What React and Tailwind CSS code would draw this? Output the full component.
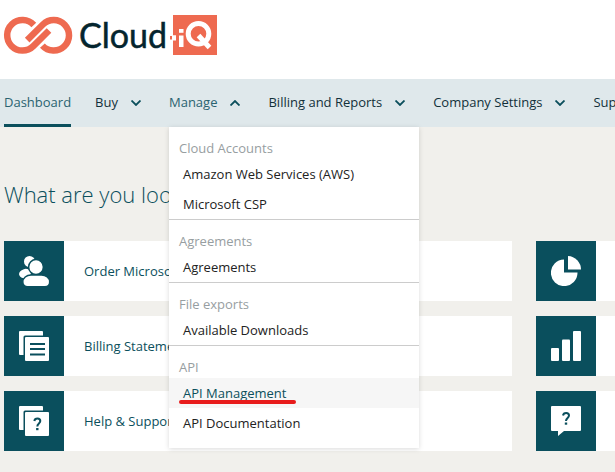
import React from "react";

const menuSections = [
  { title: "Cloud Accounts", items: ["Amazon Web Services (AWS)", "Microsoft CSP"] },
  { title: "Agreements", items: ["Agreements"] },
  { title: "File exports", items: ["Available Downloads"] },
  { title: "API", items: ["API Management", "API Documentation"] },
];

function Logo() {
  return (
    <svg width="217" height="48" viewBox="0 0 217 48" role="img" aria-label="Cloud-iQ">
      <g fill="none" stroke="#ee6a50" strokeWidth="6.500">
        <path d="M33.800 10A15.300 15.300 0 1 0 33.300 31.100L49 15.500" />
        <path d="M42.400 30.600A15.300 15.300 0 1 0 42.900 9.500L27.200 25.100" />
      </g>
      <text x="79" y="33" fontSize="34" fill="#04252e" stroke="#04252e" strokeWidth="0.5" className="font-['Lato']">Cloud</text>
      <path d="M173 0H217V40H173V25.500H176V20.500H173Z" fill="#ee6a50" />
      <rect x="170" y="21" width="2" height="3.500" fill="#ee6a50" />
      <rect x="173" y="20.500" width="3" height="4" fill="#fff" />
      <rect x="179" y="14" width="4.500" height="3.800" fill="#fff" />
      <rect x="179" y="20.500" width="4.500" height="11.500" fill="#fff" />
      <circle cx="198.500" cy="18.800" r="10.300" fill="none" stroke="#fff" strokeWidth="5" />
      <path d="M198.500 20.500L209.500 32.500" stroke="#fff" strokeWidth="5" />
    </svg>
  );
}

function Chevron({ up }) {
  return (
    <svg width="10" height="6" viewBox="0 0 10 6" fill="none" stroke="#0b4f5c" strokeWidth="1.8" aria-hidden="true">
      <path d={up ? "M0.500 5.500L5 1L9.500 5.500" : "M0.500 0.500L5 5L9.500 0.500"} />
    </svg>
  );
}

function Icon({ children }) {
  return (
    <span className="flex size-15 shrink-0 items-center justify-center bg-[#0a4f5d]">
      <svg width="30" height="30" viewBox="0 0 30 30" fill="#fff" aria-hidden="true">{children}</svg>
    </span>
  );
}

const question = (
  <g fill="none" stroke="#0a4f5d" strokeWidth="2">
    <path d="M-3 -3C-2.500 -6.500 3 -6.500 3 -3C3 -0.500 0 -0.500 0 2.500" />
    <path d="M0 4V6.200" strokeWidth="2.400" />
  </g>
);

const backSheet = <path d="M1 0H23Q24 0 24 1V4.500H6Q4.500 4.500 4.500 6V24H1Q0 24 0 23V1Q0 0 1 0Z" />;

const icons = {
  people: (
    <>
      <circle cx="10.500" cy="5.500" r="5.500" />
      <ellipse cx="6" cy="17.500" rx="6" ry="4.500" transform="rotate(-15 6 17.500)" />
      <g stroke="#0a4f5d" strokeWidth="1.500">
        <circle cx="17" cy="11" r="7.400" />
        <path d="M12 19H22.500C27 19 30.700 22 30.700 26C30.700 29 28.500 30.700 26 30.700H8.500C6 30.700 3.800 29 3.800 26C3.800 22 7.500 19 12 19Z" />
      </g>
    </>
  ),
  pages: (
    <>
      {backSheet}
      <rect x="6" y="6" width="24" height="24" rx="1" />
      <path d="M11 13H26M11 18H26M11 23.500H26" stroke="#0a4f5d" strokeWidth="2" />
    </>
  ),
  help: (
    <>
      {backSheet}
      <rect x="6" y="6" width="24" height="24" rx="1" />
      <g transform="translate(18.300 18)">{question}</g>
    </>
  ),
  pie: (
    <>
      <path d="M13 3.500V16.500H26.500A13.300 13.300 0 1 1 13 3.500Z" />
      <path d="M17 0A13.500 13.500 0 0 1 30 13.500H17Z" />
    </>
  ),
  bars: (
    <>
      <rect x="0" y="17" width="8" height="13" rx="1" />
      <rect x="11" y="8.500" width="8" height="21.500" rx="1" />
      <rect x="22" y="0" width="8" height="30" rx="1" />
    </>
  ),
  chat: (
    <>
      <path d="M1 0H29Q30 0 30 1V24Q30 25 29 25H13L7 30V25H1Q0 25 0 24V1Q0 0 1 0Z" />
      <g transform="translate(15 12.500)">{question}</g>
    </>
  ),
};

const cards = [
  { icon: "people", label: "Order Microsoft CSP" },
  { icon: "pie", name: "Reports" },
  { icon: "pages", label: "Billing Statements" },
  { icon: "bars", name: "Usage" },
  { icon: "help", label: "Help & Support" },
  { icon: "chat", name: "Contact" },
];

function Menu() {
  return (
    <div className="absolute top-full left-0 z-10 w-[250px] bg-white pb-2.5 shadow-[0_1px_5px_rgba(0,0,0,0.15)]">
      {menuSections.map((section) => (
        <section key={section.title} className="border-b border-[#cccccc] pt-2.5 last:border-b-0">
          <h2 className="px-2.5 leading-[22px] text-[#979ea1]">{section.title}</h2>
          <ul>
            {section.items.map((item) => (
              <li key={item}>
                {item === "API Management" ? (
                  <a href="#" className="relative block bg-[#f6f6f6] px-3.5 leading-[30px] text-[#0b4f5c]">
                    {item}
                    <span className="absolute bottom-1 left-2.5 h-1 w-[117px] rounded-full bg-[#e81c1c]" />
                  </a>
                ) : (
                  <a href="#" className="block px-3.5 leading-[30px] text-[#222222]">{item}</a>
                )}
              </li>
            ))}
          </ul>
        </section>
      ))}
    </div>
  );
}

function NavButton({ label, open }) {
  return (
    <button type="button" aria-expanded={!!open} className={`flex h-12 items-center gap-[13px] pr-1 ${open ? "text-[#2a6370]" : "text-[#12303a]"}`}>
      {label}
      <Chevron up={open} />
    </button>
  );
}

export default function App() {
  return (
    <div className="min-h-screen overflow-hidden bg-[#f1f0ec] font-['Open_Sans','Noto_Sans',sans-serif] text-[13px]">
      <header className="bg-white">
        <a href="#" className="block h-[79px] pt-[15px]">
          <Logo />
        </a>
      </header>
      <nav className="bg-[#dfe8eb] pl-1">
        <ul className="flex gap-6 whitespace-nowrap">
          <li>
            <a href="#" className="flex h-12 items-center border-b-3 border-[#0b4f5c] pt-[3px] text-[#2a6370]">Dashboard</a>
          </li>
          <li><NavButton label="Buy" /></li>
          <li className="relative">
            <NavButton label="Manage" open />
            <Menu />
          </li>
          <li><NavButton label="Billing and Reports" /></li>
          <li><NavButton label="Company Settings" /></li>
          <li><NavButton label="Support" /></li>
        </ul>
      </nav>
      <main className="min-w-[1044px] pt-12 pl-1">
        <h1 className="text-[22px] leading-[38px] font-light text-[#0b4f5c]">What are you looking for?</h1>
        <div className="mt-7 grid grid-cols-2 gap-x-6 gap-y-[15px]">
          {cards.map((card) => (
            <a key={card.icon} href="#" aria-label={card.name} className="flex items-center gap-5 bg-white text-[#0b4f5c]">
              <Icon>{icons[card.icon]}</Icon>
              {card.label && <span className="pt-0.5">{card.label}</span>}
            </a>
          ))}
        </div>
      </main>
    </div>
  );
}
